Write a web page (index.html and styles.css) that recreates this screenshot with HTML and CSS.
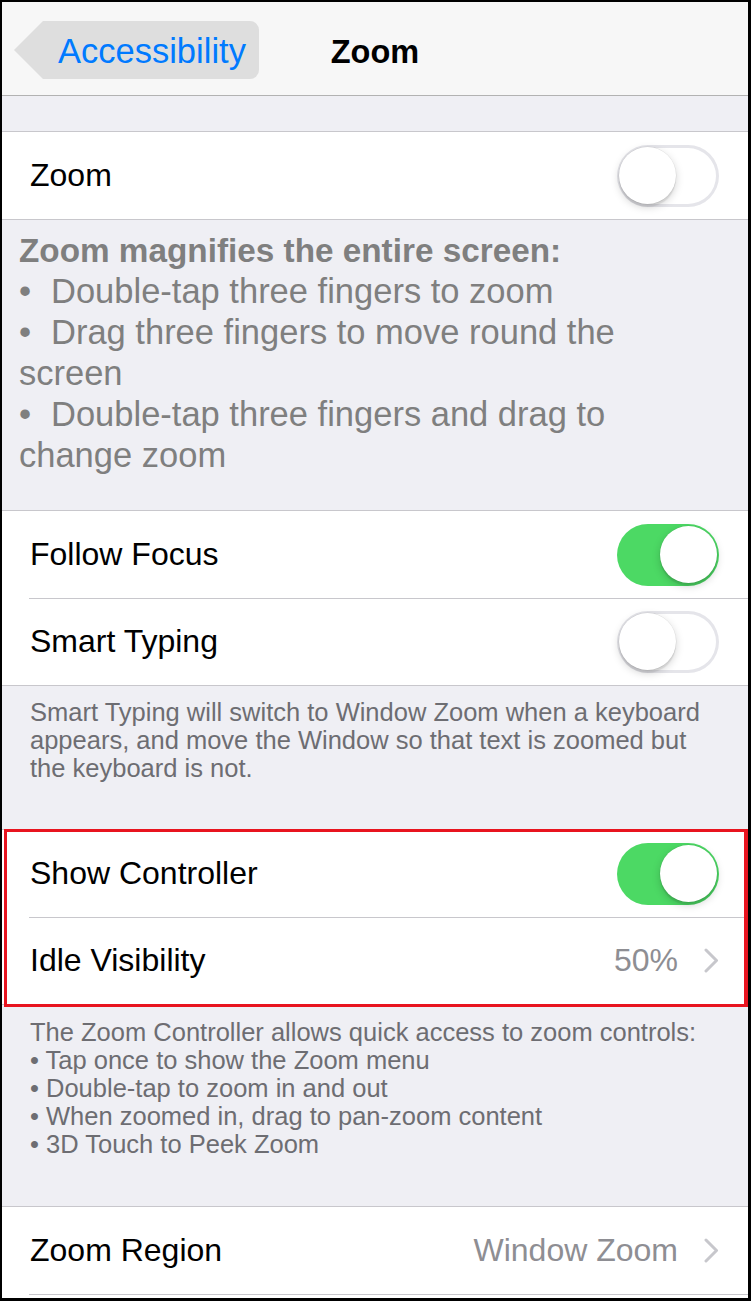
FILE: index.html
```html
<!DOCTYPE html>
<html lang="en">
<head>
<meta charset="utf-8">
<title>Zoom</title>
<link rel="stylesheet" href="styles.css">
</head>
<body>
<div class="screen">
  <header class="nav">
    <div class="nav-left"><a class="back">Accessibility</a></div>
    <h1 class="nav-title">Zoom</h1>
    <div class="nav-right"></div>
  </header>

  <div class="spacer-top"></div>

  <section class="group">
    <div class="row">
      <span class="label">Zoom</span>
      <span class="switch"><span class="knob"></span></span>
    </div>
  </section>

  <div class="desc">
    <p class="desc-head">Zoom magnifies the entire screen:</p>
    <p class="desc-item"><span class="bullet">•</span>Double-tap three fingers to zoom</p>
    <p class="desc-item"><span class="bullet">•</span>Drag three fingers to move round the<br>screen</p>
    <p class="desc-item"><span class="bullet">•</span>Double-tap three fingers and drag to<br>change zoom</p>
  </div>

  <section class="group">
    <div class="row">
      <span class="label">Follow Focus</span>
      <span class="switch on"><span class="knob"></span></span>
    </div>
    <div class="row">
      <span class="label">Smart Typing</span>
      <span class="switch"><span class="knob"></span></span>
    </div>
  </section>

  <div class="footer footer-1">
    Smart Typing will switch to Window Zoom when a keyboard<br>appears, and move the Window so that text is zoomed but<br>the keyboard is not.
  </div>

  <section class="group highlighted">
    <div class="row">
      <span class="label">Show Controller</span>
      <span class="switch on"><span class="knob"></span></span>
    </div>
    <div class="row">
      <span class="label">Idle Visibility</span>
      <span class="value">50%</span>
      <svg class="chevron" width="15" height="25" viewBox="0 0 15 25"><path d="M2 2 L12.5 12.5 L2 23" fill="none" stroke="#c7c7cc" stroke-width="3" stroke-linecap="round" stroke-linejoin="round"/></svg>
    </div>
  </section>

  <div class="footer footer-2">
    The Zoom Controller allows quick access to zoom controls:<br>• Tap once to show the Zoom menu<br>• Double-tap to zoom in and out<br>• When zoomed in, drag to pan-zoom content<br>• 3D Touch to Peek Zoom
  </div>

  <section class="group open">
    <div class="row">
      <span class="label">Zoom Region</span>
      <span class="value">Window Zoom</span>
      <svg class="chevron" width="15" height="25" viewBox="0 0 15 25"><path d="M2 2 L12.5 12.5 L2 23" fill="none" stroke="#c7c7cc" stroke-width="3" stroke-linecap="round" stroke-linejoin="round"/></svg>
    </div>
    <div class="row"></div>
  </section>
</div>
</body>
</html>
```

FILE: styles.css
```css
* {
  box-sizing: border-box;
  margin: 0;
  padding: 0;
}

html, body {
  margin: 0;
  background: #000;
}

body {
  font-family: "Liberation Sans", Arial, sans-serif;
}

.screen {
  width: 751px;
  height: 1301px;
  border-style: solid;
  border-color: #000;
  border-width: 2px 3px 3px 2px;
  background: #efeff4;
  overflow: hidden;
}

/* Navigation bar */
.nav {
  height: 94px;
  background: #f7f7f7;
  border-bottom: 1px solid #b2b2b2;
  display: grid;
  grid-template-columns: 1fr auto 1fr;
  align-items: start;
  padding-top: 19px;
}

.back {
  margin-left: 12px;
  width: 245px;
  height: 58px;
  display: flex;
  align-items: center;
  padding: 2px 0 0 44px;
  background: #dedede;
  color: #007aff;
  font-size: 34.5px;
  border-radius: 0 9px 9px 0;
  clip-path: polygon(29px 0, 100% 0, 100% 100%, 29px 100%, 0 50%);
}

.nav-title {
  font-size: 32.5px;
  font-weight: bold;
  line-height: 58px;
  padding-top: 2px;
  color: #000;
}

.spacer-top {
  height: 35px;
}

/* Table groups */
.group {
  background: #fff;
  border-top: 1px solid #c8c7cc;
  border-bottom: 1px solid #c8c7cc;
  position: relative;
}

.row {
  height: 87px;
  display: flex;
  align-items: center;
  padding: 0 29px 0 28px;
  position: relative;
}

.row + .row::before {
  content: "";
  position: absolute;
  left: 27px;
  right: 0;
  top: 0;
  height: 1px;
  background: #c8c7cc;
}

.label {
  font-size: 32px;
  color: #000;
}

.value {
  margin-left: auto;
  font-size: 32px;
  color: #8e8e93;
}

.chevron {
  margin-left: 26px;
  flex: none;
}

/* Switches */
.switch {
  margin-left: auto;
  width: 102px;
  height: 62px;
  border-radius: 31px;
  background: #fff;
  box-shadow: inset 0 0 0 3px #e5e5ea;
  display: flex;
  align-items: center;
  padding: 0 2px;
  flex: none;
}

.switch.on {
  background: #4cd964;
  box-shadow: none;
  justify-content: flex-end;
}

.knob {
  width: 57px;
  height: 57px;
  border-radius: 50%;
  background: #fff;
  box-shadow: 0 0 0 0.5px rgba(0, 0, 0, 0.08), 0 3px 8px rgba(0, 0, 0, 0.18), 0 3px 1px rgba(0, 0, 0, 0.08);
}

/* Description block */
.desc {
  height: 290px;
  padding: 10px 17px 0 17px;
  color: #7f7f7f;
  font-size: 34.5px;
  line-height: 41px;
  white-space: nowrap;
}

.desc-head {
  font-weight: bold;
  font-size: 33.3px;
}

.bullet {
  display: inline-block;
  width: 32px;
}

/* Footers */
.footer {
  padding-left: 28px;
  color: #6d6d72;
  font-size: 25.5px;
  line-height: 28px;
  white-space: nowrap;
}

.footer-1 {
  height: 143px;
  padding-top: 12px;
}

.footer-2 {
  height: 201px;
  padding-top: 13px;
}

/* Red annotation frame */
.highlighted::after {
  content: "";
  position: absolute;
  top: -1px;
  bottom: -3px;
  left: 2px;
  right: 0;
  border: 3px solid #e8141f;
  border-right-width: 4px;
  pointer-events: none;
}

.open {
  border-bottom: none;
}
```
